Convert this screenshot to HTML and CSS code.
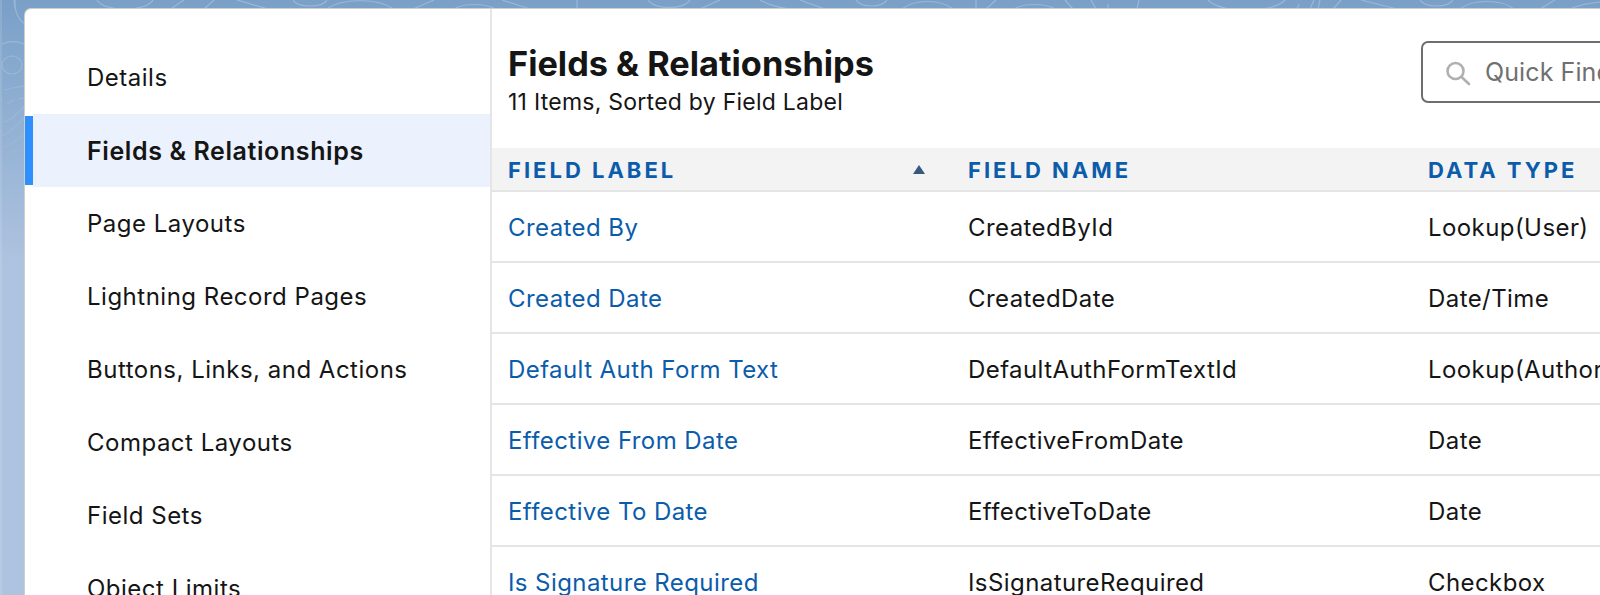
FILE: index.html
```html
<!DOCTYPE html>
<html lang="en">

<head>
    <meta charset="UTF-8">
    <meta name="viewport" content="width=device-width, initial-scale=1.0">
    <title>Fields &amp; Relationships</title>
    <link rel="stylesheet" href="styles.css">
</head>

<body>
    <svg class="backdrop" width="1600" height="595" fill="none" stroke="#9ab8d7" stroke-width="1.2" aria-hidden="true">
        <!-- left strip -->
        <path d="M14 0c1 10 3 19 11 24M2 44c7-3 15-3 22 0M2 65a10 9 0 1 0 20 0a10 9 0 1 0-20 0M5 90c6-2 12-3 19-4M7 104l6-4M18 99l6-1" />
        <path d="M2 122c6 0 10-3 22-15M2 136c8-3 14-10 22-18M3 148c7-3 13-7 21-13M8 155l8-5M3 168c7-1 14-2 21-4" />
        <!-- top strip -->
        <path d="M15 0v8M97 0c6 12 50 12 56 0M171 9c4-3 8-6 13-9M204 9l10-9M237 0l31 9M293 0c4 8 30 8 34 0M327 9c14-11 52-11 66 0M413 9l21-9M454 9c10-6 31-6 41 0M502 0l28 9M577 0v8" />
        <path d="M648 0c6 10 36 10 42 0M700 9l20-9M760 0c6 4 20 8 30 9M800 0l25 9M856 0c5 8 26 8 31 0M902 9c12-10 39-10 51 0M976 0v8M986 9l10-9M1014 9c10-6 31-6 41 0M1065 0l8 9M1091 0l5 9M1108 4v4M1139 0l-2 9" />
        <path d="M1208 0c14 14 63 14 77 0M1297 9l2-5M1310 9l4-9M1320 0l-2 9M1333 9l8-9M1361 0l36 9M1420 0c5 8 28 8 33 0M1460 9c12-10 42-10 54 0M1540 9l15-9M1570 9c8-4 20-6 30-7" />
    </svg>

    <div class="panel">
        <nav class="side-nav">
            <a class="nav-item">Details</a>
            <a class="nav-item active">Fields &amp; Relationships</a>
            <a class="nav-item">Page Layouts</a>
            <a class="nav-item">Lightning Record Pages</a>
            <a class="nav-item">Buttons, Links, and Actions</a>
            <a class="nav-item">Compact Layouts</a>
            <a class="nav-item">Field Sets</a>
            <a class="nav-item">Object Limits</a>
        </nav>

        <main class="content">
            <div class="content-head">
                <div class="head-text">
                    <h1>Fields &amp; Relationships</h1>
                    <p>11 Items, Sorted by Field Label</p>
                </div>
                <div class="quick-find">
                    <svg width="26" height="28" viewBox="0 0 26 28" fill="none" stroke="#b0b0b0" stroke-width="2.6">
                        <circle cx="10.5" cy="13" r="8" />
                        <path d="M16.5 19l7.5 7" stroke-linecap="round" />
                    </svg>
                    <span>Quick Find</span>
                </div>
            </div>

            <div class="row head-row">
                <div class="cell label-cell">FIELD LABEL <span class="sort-arrow"></span></div>
                <div class="cell">FIELD NAME</div>
                <div class="cell">DATA TYPE</div>
            </div>
            <div class="row">
                <div class="cell label-cell"><a>Created By</a></div>
                <div class="cell">CreatedById</div>
                <div class="cell">Lookup(User)</div>
            </div>
            <div class="row">
                <div class="cell label-cell"><a>Created Date</a></div>
                <div class="cell">CreatedDate</div>
                <div class="cell">Date/Time</div>
            </div>
            <div class="row">
                <div class="cell label-cell"><a>Default Auth Form Text</a></div>
                <div class="cell">DefaultAuthFormTextId</div>
                <div class="cell">Lookup(Authorization Form Text)</div>
            </div>
            <div class="row">
                <div class="cell label-cell"><a>Effective From Date</a></div>
                <div class="cell">EffectiveFromDate</div>
                <div class="cell">Date</div>
            </div>
            <div class="row">
                <div class="cell label-cell"><a>Effective To Date</a></div>
                <div class="cell">EffectiveToDate</div>
                <div class="cell">Date</div>
            </div>
            <div class="row">
                <div class="cell label-cell"><a>Is Signature Required</a></div>
                <div class="cell">IsSignatureRequired</div>
                <div class="cell">Checkbox</div>
            </div>
        </main>
    </div>
</body>

</html>
```

FILE: styles.css
```css
* {
    margin: 0;
    padding: 0;
    box-sizing: border-box;
}

html,
body {
    height: 595px;
    overflow: hidden;
}

body {
    font-family: Inter, "Noto Sans", sans-serif;
    color: #151515;
    background: linear-gradient(#7aa0c8, #adc3df 260px);
    padding: 9px 0 0 25px;
    position: relative;
}

/* lighter hairline down the window edge */
body::before {
    content: "";
    position: absolute;
    top: 0;
    bottom: 0;
    left: 0;
    width: 2px;
    background: rgba(255, 255, 255, 0.12);
}

.backdrop {
    position: absolute;
    top: 0;
    left: 0;
}

.panel {
    position: relative;
    display: flex;
    width: 1600px;
    height: 620px;
    background: #fff;
    border-top-left-radius: 6px;
    box-shadow: 0 0 0 1px #d0cec9;
}

/* Left navigation */
.side-nav {
    width: 467px;
    flex-shrink: 0;
    padding-top: 32px;
    border-right: 2px solid #e5e5e5;
}

.nav-item {
    display: flex;
    align-items: center;
    height: 73px;
    padding-left: 62px;
    font-size: 24px;
    letter-spacing: 0.5px;
}

.nav-item.active {
    font-weight: 600;
    font-size: 25px;
    letter-spacing: 0.6px;
    background: linear-gradient(#ebf2fd, #ebf2fd) 8px 0 no-repeat;
    position: relative;
}

.nav-item.active::before {
    content: "";
    position: absolute;
    left: 0;
    top: 2px;
    bottom: 2px;
    width: 8px;
    background: #2e90ff;
}

/* Table side */
.content {
    flex: 1;
    min-width: 0;
}

.content-head {
    display: flex;
    justify-content: space-between;
    height: 139px;
    padding: 32px 0 0 16px;
}

.head-text {
    padding-top: 4px;
}

h1 {
    font-size: 34.3px;
    font-weight: 700;
    line-height: 38px;
}

.content-head p {
    font-size: 23px;
    line-height: 27px;
    letter-spacing: 0.25px;
    margin-top: 6px;
}

.quick-find {
    display: flex;
    align-items: center;
    gap: 14px;
    width: 204px;
    height: 62px;
    padding-left: 22px;
    border: 2px solid #6e6e6e;
    border-radius: 7px;
    font-size: 25px;
    letter-spacing: 0.1px;
    color: #707070;
    white-space: nowrap;
}

.row {
    display: flex;
    align-items: center;
    height: 71px;
    padding: 2px 0 0 16px;
    font-size: 24px;
    letter-spacing: 0.42px;
    border-bottom: 2px solid #e5e5e5;
}

.head-row {
    height: 44px;
    background: #f3f3f3;
    font-size: 22px;
    font-weight: 700;
    letter-spacing: 3px;
    color: #0b5cab;
}

.cell {
    width: 460px;
    flex-shrink: 0;
    white-space: nowrap;
}

.label-cell {
    position: relative;
}

.label-cell a {
    color: #0b5cab;
}

.sort-arrow {
    position: absolute;
    left: 405px;
    top: 8px;
    border-left: 6.5px solid transparent;
    border-right: 6.5px solid transparent;
    border-bottom: 9px solid #355a7e;
}
```
